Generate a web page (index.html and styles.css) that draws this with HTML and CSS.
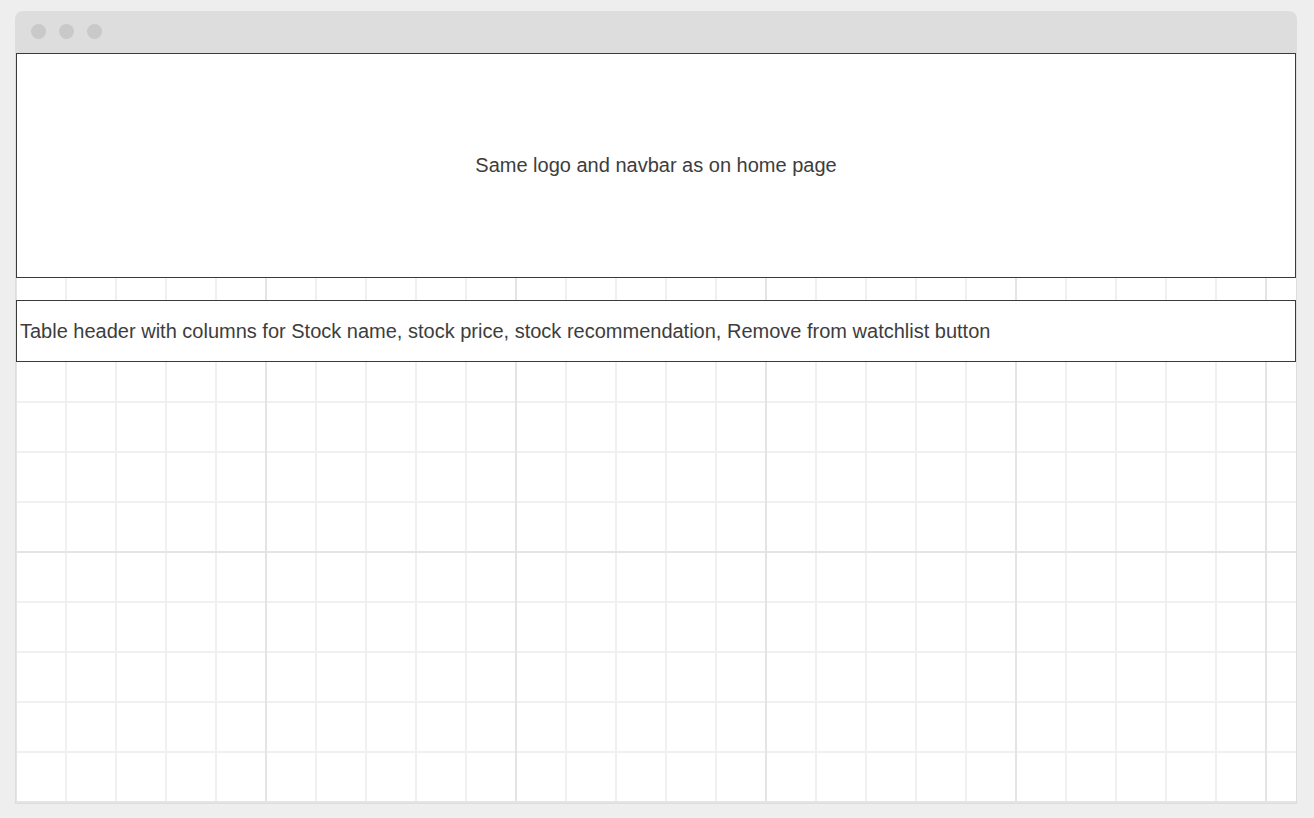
FILE: index.html
```html
<!DOCTYPE html>
<html lang="en">
<head>
<meta charset="utf-8">
<title>Watchlist wireframe</title>
<link rel="stylesheet" href="styles.css">
</head>
<body>
<div class="window">
  <div class="titlebar">
    <span class="dot"></span>
    <span class="dot"></span>
    <span class="dot"></span>
  </div>
  <div class="content">
    <div class="header-box">Same logo and navbar as on home page</div>
    <div class="table-header">Table header with columns for Stock name, stock price, stock recommendation, Remove from watchlist button</div>
  </div>
</div>
</body>
</html>
```

FILE: styles.css
```css
html, body {
  margin: 0;
  padding: 0;
}

body {
  background: #eeeeee;
  padding: 11px 17px 0 15px;
  font-family: "Liberation Sans", Arial, sans-serif;
  color: #3d3d3d;
}

.window {
  width: 1282px;
  box-sizing: border-box;
  background: #dddddd;
  border-radius: 8px 8px 0 0;
  padding: 0 1px 1px 1px;
}

.titlebar {
  height: 42px;
  display: flex;
  align-items: center;
  gap: 13px;
  padding-left: 15px;
  padding-bottom: 2px;
  box-sizing: border-box;
}

.dot {
  width: 15px;
  height: 15px;
  border-radius: 50%;
  background: #c9c9c9;
}

.content {
  height: 750px;
  display: flex;
  flex-direction: column;
  background-color: #ffffff;
  background-image:
    linear-gradient(90deg, transparent 248px, #e4e4e4 248px, #e4e4e4 250px),
    linear-gradient(transparent 248px, #e4e4e4 248px, #e4e4e4 250px),
    linear-gradient(90deg, transparent 48px, #f0f0f0 48px, #f0f0f0 50px),
    linear-gradient(transparent 48px, #f0f0f0 48px, #f0f0f0 50px);
  background-size: 250px 250px, 250px 250px, 50px 50px, 50px 50px;
  background-position: 1px 0, 1px 0, 1px 0, 1px 0;
}

.header-box {
  height: 225px;
  box-sizing: border-box;
  border: 1px solid #3a3a3a;
  background: #ffffff;
  display: flex;
  align-items: center;
  justify-content: center;
  font-size: 20px;
  margin-bottom: 22px;
}

.table-header {
  height: 62px;
  box-sizing: border-box;
  border: 1px solid #3a3a3a;
  background: #ffffff;
  display: flex;
  align-items: center;
  padding-left: 3px;
  font-size: 20px;
}
```
